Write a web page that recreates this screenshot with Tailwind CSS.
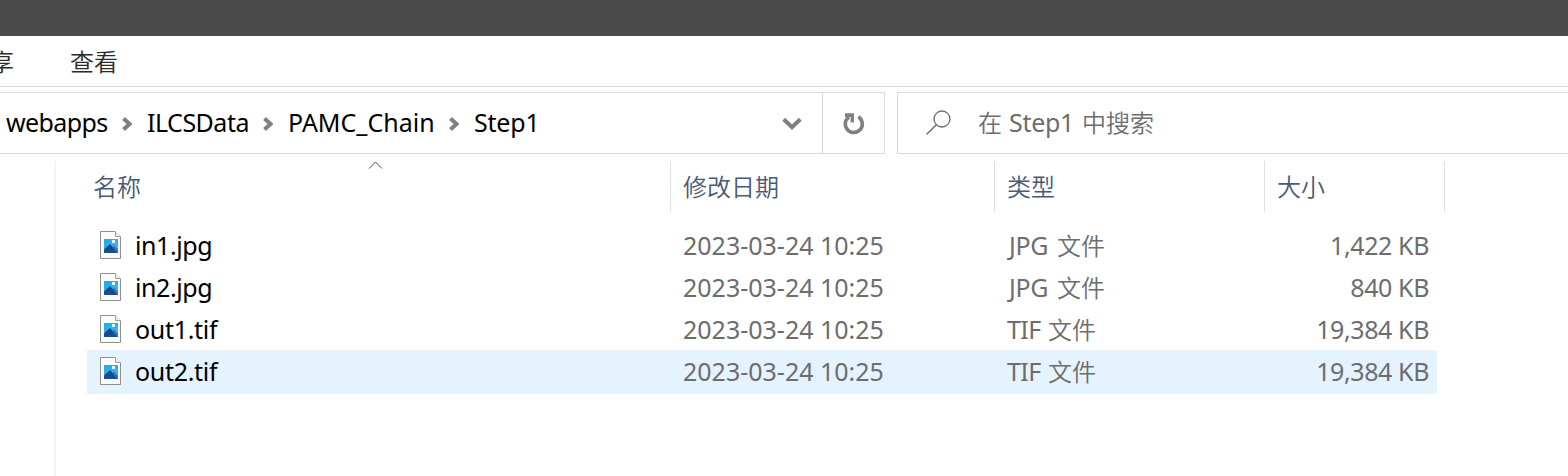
<!DOCTYPE html>
<html lang="zh-CN">
<head>
<meta charset="utf-8">
<title>Step1</title>
<script src="https://cdn.jsdelivr.net/npm/@tailwindcss/browser@4"></script>
</head>
<body class="bg-white">
<svg class="absolute h-0 w-0">
  <defs>
    <linearGradient id="sky" x1="0" y1="0" x2="0.6" y2="1"><stop offset="0" stop-color="#1fa8e8"/><stop offset="1" stop-color="#38bdf4"/></linearGradient>
    <linearGradient id="hill" x1="0" y1="0" x2="0" y2="1"><stop offset="0" stop-color="#143f7c"/><stop offset="1" stop-color="#1a4f97"/></linearGradient>
  </defs>
  <symbol id="image-file" viewBox="0 0 21 28">
    <path d="M.5.5H15l5.500 5.500V27.500H.5z" fill="#fbfbfb" stroke="#8e8e8e"/>
    <path d="M15.500.5V5.500H20.500" fill="#ededed" stroke="#a0a0a0"/>
    <rect x="4" y="8" width="14" height="14" fill="url(#sky)"/>
    <path d="M10 18l4-3.500L18 18.500V22H10z" fill="#3d6fd0"/>
    <path d="M4 18.500L10 13l7.500 9H4z" fill="url(#hill)"/>
    <rect x="12" y="9" width="3" height="3" fill="#e4f6fe"/>
  </symbol>
  <symbol id="crumb" viewBox="0 0 10 14"><path d="M1.500 1.500L7.500 7l-6 5.500" fill="none" stroke="#808080" stroke-width="4"/></symbol>
</svg>
<div class="flex h-[476px] w-[1568px] flex-col overflow-hidden font-['Noto_Sans','Noto_Sans_CJK_SC',sans-serif] text-[25px] leading-[42px] whitespace-nowrap text-black">
  <div class="h-9 shrink-0 bg-[#4a4a4a]"></div>
  <nav class="flex h-[51px] shrink-0 items-center border-b border-[#d9d9d9] font-['Noto_Sans_CJK_SC',sans-serif] text-[24px] font-[350] text-[#2b2b2b]">
    <span class="-ml-[34px] w-12">共享</span><span class="ml-14">查看</span>
  </nav>
  <div class="mt-[5px] flex h-[62px] shrink-0">
    <div class="flex w-[885px] items-center border-y border-r border-[#d9d9d9]">
      <span class="mb-0.5 ml-1.5 w-[116px] tracking-[-0.6px]">webapps</span>
      <svg class="mt-0.5 h-3.5 w-2.5"><use href="#crumb"/></svg>
      <span class="mb-0.5 ml-[15px] w-[116px] tracking-[-0.5px]">ILCSData</span>
      <svg class="mt-0.5 h-3.5 w-2.5"><use href="#crumb"/></svg>
      <span class="mb-0.5 ml-[15px] w-[161px]">PAMC_Chain</span>
      <svg class="mt-0.5 h-3.5 w-2.5"><use href="#crumb"/></svg>
      <span class="mb-0.5 ml-[15px] tracking-[-0.2px]">Step1</span>
      <svg class="mt-0.5 ml-auto mr-[20px] h-3.5 w-5" viewBox="0 0 20 14"><path d="M1.700 2.200L10 10.300l8.300-8.100" fill="none" stroke="#808080" stroke-width="4"/></svg>
      <div class="flex h-full w-[62px] items-center justify-center border-l border-[#d9d9d9]">
        <svg class="mt-0.5 h-[22px] w-[22px]" viewBox="0 0 22 22"><path d="M15.300 3.800A8.500 8.500 0 1 1 6 4" fill="none" stroke="#808080" stroke-width="3.600"/><path d="M2 .3H11V9.500H7.600V4H2z" fill="#808080"/></svg>
      </div>
    </div>
    <div class="ml-3 flex flex-1 items-center border-y border-l border-[#d9d9d9] text-[#6d6d6d]">
      <svg class="ml-7 h-[26px] w-[26px]" viewBox="0 0 26 26"><circle cx="16" cy="9" r="8" fill="none" stroke="#6d6d6d" stroke-width="1.300"/><path d="M10.300 14.700L.5 24.500" stroke="#6d6d6d" stroke-width="1.500"/></svg>
      <div class="ml-[26px] flex"><span class="w-[31px] text-[24px] font-[350]">在</span><span class="-mt-px w-[73px] tracking-[-0.3px]">Step1</span><span class="text-[24px] font-[350]">中搜索</span></div>
    </div>
  </div>
  <main class="mt-[7px] flex flex-1">
    <div class="w-14 border-r-2 border-[#f5f5f5]"></div>
    <div class="flex flex-1 flex-col">
      <header class="flex h-[51px] text-[24px] leading-[52px] font-[350] text-[#475a78]">
        <div class="relative w-[615px] border-r border-[#e0e0e0] pl-[37px]">名称
          <svg class="absolute top-0 left-[312px] h-2 w-[15px]" viewBox="0 0 15 8"><path d="M1 7.500L7.500 1L14 7.500" fill="none" stroke="#444"/></svg>
        </div>
        <div class="w-[324px] border-r border-[#e0e0e0] pl-3">修改日期</div>
        <div class="w-[270px] border-r border-[#e0e0e0] pl-3">类型</div>
        <div class="w-[180px] border-r border-[#e0e0e0] pl-3">大小</div>
      </header>
      <div class="mt-3 ml-[31px] w-[1350px] text-[#6d6d6d]">
        <div class="flex h-[42px]"><svg class="mt-[7px] ml-[13px] h-7 w-[21px]"><use href="#image-file"/></svg><span class="ml-3.5 w-[548px] tracking-[-0.4px] text-black">in1.jpg</span><span class="w-[324px]">2023-03-24 10:25</span><span class="w-[50px] pl-0.5 tracking-[-0.3px]">JPG</span><span class="mt-px text-[24px] font-[350]">文件</span><span class="mr-2 ml-auto tracking-[-0.4px]">1,422 KB</span></div>
        <div class="flex h-[42px]"><svg class="mt-[7px] ml-[13px] h-7 w-[21px]"><use href="#image-file"/></svg><span class="ml-3.5 w-[548px] tracking-[-0.4px] text-black">in2.jpg</span><span class="w-[324px]">2023-03-24 10:25</span><span class="w-[50px] pl-0.5 tracking-[-0.3px]">JPG</span><span class="mt-px text-[24px] font-[350]">文件</span><span class="mr-2 ml-auto tracking-[-0.4px]">840 KB</span></div>
        <div class="flex h-[42px]"><svg class="mt-[7px] ml-[13px] h-7 w-[21px]"><use href="#image-file"/></svg><span class="ml-3.5 w-[548px] tracking-[-0.3px] text-black">out1.tif</span><span class="w-[324px]">2023-03-24 10:25</span><span class="w-[41px] tracking-[-0.6px]">TIF</span><span class="mt-px text-[24px] font-[350]">文件</span><span class="mr-2 ml-auto tracking-[-0.4px]">19,384 KB</span></div>
        <div class="flex h-11 bg-[#e5f3ff]"><svg class="mt-[7px] ml-[13px] h-7 w-[21px]"><use href="#image-file"/></svg><span class="ml-3.5 w-[548px] tracking-[-0.3px] text-black">out2.tif</span><span class="w-[324px]">2023-03-24 10:25</span><span class="w-[41px] tracking-[-0.6px]">TIF</span><span class="mt-px text-[24px] font-[350]">文件</span><span class="mr-2 ml-auto tracking-[-0.4px]">19,384 KB</span></div>
      </div>
    </div>
  </main>
</div>
</body>
</html>
